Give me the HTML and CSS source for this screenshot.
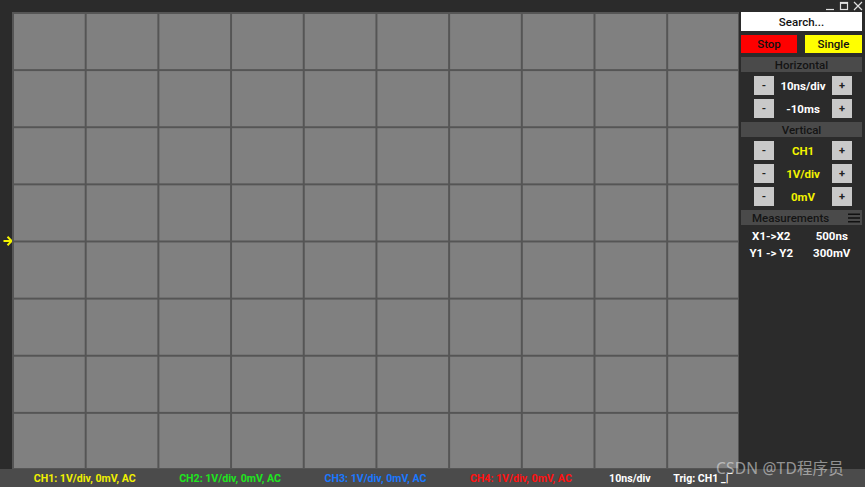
FILE: index.html
```html
<!DOCTYPE html>
<html>
<head>
<meta charset="utf-8">
<link rel="stylesheet" href="styles.css">
</head>
<body>
<div class="app">
  <div class="titlebar">
    <div class="winctl">
      <svg class="wc" width="10" height="10" viewBox="0 0 10 10"><path d="M1 8.5H9" stroke="#e0e0e0" stroke-width="1.2"/></svg>
      <svg class="wc" width="10" height="10" viewBox="0 0 10 10"><rect x="1.5" y="1.5" width="7" height="7" fill="none" stroke="#e0e0e0" stroke-width="1.2"/><path d="M1.5 2.2H8.5" stroke="#e0e0e0" stroke-width="1.4"/></svg>
      <svg class="wc" width="10" height="10" viewBox="0 0 10 10"><path d="M1 1L9 9M9 1L1 9" stroke="#e0e0e0" stroke-width="1.2"/></svg>
    </div>
  </div>
  <div class="main">
    <div class="gutter">
      <svg class="arrow" width="10" height="12" viewBox="0 0 10 12"><path d="M0.5 6H8.5M4.5 1.8L8.7 6L4.5 10.2" fill="none" stroke="#f5f500" stroke-width="2"/></svg>
    </div>
    <div class="scope"></div>
    <div class="panel">
      <div class="search">Search...</div>
      <div class="runrow">
        <div class="btn-stop">Stop</div>
        <div class="btn-single">Single</div>
      </div>
      <div class="section-head">Horizontal</div>
      <div class="ctlrow"><div class="sbtn">-</div><div class="val">10ns/div</div><div class="sbtn">+</div></div>
      <div class="ctlrow"><div class="sbtn">-</div><div class="val">-10ms</div><div class="sbtn">+</div></div>
      <div class="section-head">Vertical</div>
      <div class="ctlrow"><div class="sbtn">-</div><div class="val yellow">CH1</div><div class="sbtn">+</div></div>
      <div class="ctlrow"><div class="sbtn">-</div><div class="val yellow">1V/div</div><div class="sbtn">+</div></div>
      <div class="ctlrow"><div class="sbtn">-</div><div class="val yellow">0mV</div><div class="sbtn">+</div></div>
      <div class="section-head meas-head">Measurements
        <svg class="menu" width="12" height="10" viewBox="0 0 12 10"><path d="M0 1.2H12M0 5H12M0 8.8H12" stroke="#111" stroke-width="1.6"/></svg>
      </div>
      <div class="measrow"><span>X1-&gt;X2</span><span>500ns</span></div>
      <div class="measrow"><span>Y1 -&gt; Y2</span><span>300mV</span></div>
    </div>
  </div>
  <div class="status">
    <div class="st2 ch1">CH1: 1V/div, 0mV, AC</div>
    <div class="st2 ch2">CH2: 1V/div, 0mV, AC</div>
    <div class="st2 ch3">CH3: 1V/div, 0mV, AC</div>
    <div class="st2 ch4">CH4: 1V/div, 0mV, AC</div>
    <div class="st1">10ns/div</div>
    <div class="st1">Trig: CH1 _|&#8254;</div>
  </div>
  <div class="watermark">CSDN @TD程序员</div>
</div>
</body>
</html>
```

FILE: styles.css
```css
* { box-sizing: border-box; }
html, body {
  margin: 0;
  padding: 0;
  width: 865px;
  height: 487px;
  overflow: hidden;
  background: #2b2b2b;
  font-family: Roboto, "Liberation Sans", sans-serif;
}
.app {
  position: relative;
  width: 865px;
  height: 487px;
  display: flex;
  flex-direction: column;
}
.titlebar {
  height: 12px;
  display: flex;
  justify-content: flex-end;
  align-items: center;
}
.winctl {
  display: flex;
  gap: 4px;
  padding-right: 2px;
  align-items: center;
}
.wc { display: block; }
.main {
  flex: 1;
  display: flex;
  min-height: 0;
}
.gutter {
  width: 12px;
  flex: none;
  display: flex;
  align-items: center;
  justify-content: flex-start;
  padding-left: 3px;
  padding-top: 1px;
}
.arrow { display: block; flex: none; }
.scope {
  width: 727px;
  height: 457px;
  flex: none;
  background-color: #808080;
  background-image:
    linear-gradient(to right, #555555 0, #555555 1.5px, transparent 1.5px),
    linear-gradient(to bottom, #555555 0, #555555 1.5px, transparent 1.5px);
  background-size: 72.7px 100%, 100% 57.125px;
  border-right: 1px solid #555555;
  border-bottom: 1px solid #555555;
}
.panel {
  width: 126px;
  padding: 0 3px 0 2px;
  display: flex;
  flex-direction: column;
  font-size: 11px;
  font-weight: 700;
}
.search {
  height: 19px;
  background: #ffffff;
  color: #111;
  display: flex;
  align-items: center;
  justify-content: center;
  font-weight: 500;
  font-size: 11.5px;
}
.runrow {
  margin-top: 4px;
  height: 18px;
  display: flex;
  gap: 8px;
}
.btn-stop, .btn-single {
  display: flex;
  align-items: center;
  justify-content: center;
  color: #111;
  font-weight: 500;
  font-size: 11.5px;
}
.btn-stop { width: 56px; background: #ff0000; }
.btn-single { flex: 1; background: #ffff00; }
.section-head {
  margin-top: 4px;
  height: 15px;
  background: #4a4a4a;
  color: #141414;
  font-weight: 500;
  font-size: 11.5px;
  display: flex;
  align-items: center;
  justify-content: center;
  position: relative;
}
.meas-head { justify-content: flex-start; padding-left: 11px; }
.menu {
  position: absolute;
  right: 2px;
  top: 3px;
}
.ctlrow {
  margin-top: 4px;
  height: 19px;
  display: flex;
  align-items: center;
  padding: 0 10px 0 13px;
}
.sbtn {
  width: 20px;
  height: 19px;
  background: #c9c9c9;
  color: #222;
  display: flex;
  align-items: center;
  justify-content: center;
  font-size: 11px;
}
.val {
  flex: 1;
  text-align: center;
  color: #ffffff;
  font-size: 11.5px;
}
.yellow { color: #f2f200; }
.measrow {
  display: flex;
  color: #ffffff;
  font-size: 11.5px;
  height: 17px;
  align-items: center;
}
.measrow span { flex: 1; text-align: center; }
.meas-head + .measrow { margin-top: 2px; }
.status {
  height: 18px;
  background: #4b4b4b;
  display: flex;
  align-items: center;
  padding-left: 12px;
  font-size: 10.6px;
  font-weight: 700;
}
.st2 { width: 145.4px; text-align: center; }
.st1 { width: 72.7px; text-align: center; color: #ffffff; }
.ch1 { color: #f0f000; }
.ch2 { color: #1ee61e; }
.ch3 { color: #1a78ff; }
.ch4 { color: #ff1010; }
.watermark {
  position: absolute;
  left: 716px;
  top: 456px;
  font-family: "Noto Sans", "Noto Sans CJK SC", sans-serif;
  font-size: 15.5px;
  color: rgba(235, 235, 235, 0.55);
  letter-spacing: 0.2px;
}
```
